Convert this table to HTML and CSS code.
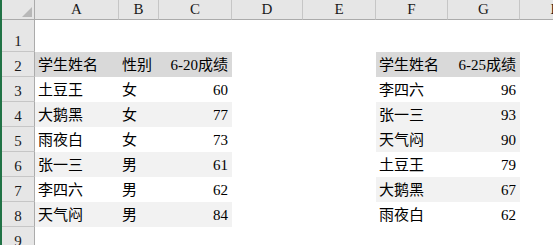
FILE: index.html
```html
<!DOCTYPE html>
<html lang="zh-CN">
<head>
<meta charset="utf-8">
<title>Sheet</title>
<link rel="stylesheet" href="styles.css">
</head>
<body>
<div class="sheet">
  <div class="row hdr">
    <div class="corner"><span class="tri"></span></div>
    <div class="ch">A</div><div class="ch">B</div><div class="ch">C</div><div class="ch">D</div>
    <div class="ch">E</div><div class="ch">F</div><div class="ch">G</div><div class="ch ch-last">H</div>
  </div>
  <div class="row r1">
    <div class="rh">1</div>
    <div class="c"></div><div class="c"></div><div class="c"></div><div class="c"></div>
    <div class="c"></div><div class="c"></div><div class="c"></div><div class="c"></div>
  </div>
  <div class="row">
    <div class="rh">2</div>
    <div class="c th">学生姓名</div><div class="c th">性别</div><div class="c th num">6-20成绩</div><div class="c"></div>
    <div class="c"></div><div class="c th">学生姓名</div><div class="c th num">6-25成绩</div><div class="c"></div>
  </div>
  <div class="row">
    <div class="rh">3</div>
    <div class="c">土豆王</div><div class="c">女</div><div class="c num">60</div><div class="c"></div>
    <div class="c"></div><div class="c">李四六</div><div class="c num">96</div><div class="c"></div>
  </div>
  <div class="row">
    <div class="rh">4</div>
    <div class="c alt">大鹅黑</div><div class="c alt">女</div><div class="c alt num">77</div><div class="c"></div>
    <div class="c"></div><div class="c alt">张一三</div><div class="c alt num">93</div><div class="c"></div>
  </div>
  <div class="row">
    <div class="rh">5</div>
    <div class="c">雨夜白</div><div class="c">女</div><div class="c num">73</div><div class="c"></div>
    <div class="c"></div><div class="c alt">天气闷</div><div class="c alt num">90</div><div class="c"></div>
  </div>
  <div class="row">
    <div class="rh">6</div>
    <div class="c alt">张一三</div><div class="c alt">男</div><div class="c alt num">61</div><div class="c"></div>
    <div class="c"></div><div class="c">土豆王</div><div class="c num">79</div><div class="c"></div>
  </div>
  <div class="row">
    <div class="rh">7</div>
    <div class="c">李四六</div><div class="c">男</div><div class="c num">62</div><div class="c"></div>
    <div class="c"></div><div class="c alt">大鹅黑</div><div class="c alt num">67</div><div class="c"></div>
  </div>
  <div class="row">
    <div class="rh">8</div>
    <div class="c alt">天气闷</div><div class="c alt">男</div><div class="c alt num">84</div><div class="c"></div>
    <div class="c"></div><div class="c">雨夜白</div><div class="c num">62</div><div class="c"></div>
  </div>
  <div class="row">
    <div class="rh">9</div>
    <div class="c"></div><div class="c"></div><div class="c"></div><div class="c"></div>
    <div class="c"></div><div class="c"></div><div class="c"></div><div class="c"></div>
  </div>
</div>
</body>
</html>
```

FILE: styles.css
```css
* { box-sizing: border-box; }
html, body {
  margin: 0;
  padding: 0;
  background: #ffffff;
  overflow: hidden;
}
body {
  width: 553px;
  height: 245px;
  font-family: "Liberation Serif", "Noto Sans CJK SC", serif;
  color: #000;
}
.sheet {
  width: 553px;
  height: 245px;
  border-left: 2px solid #217346;
  overflow: hidden;
}
.row {
  display: grid;
  grid-template-columns: 33px 84px 40px 73px 71px 73px 72px 72px 72px;
  height: 25px;
}
.row.hdr { height: 20px; }
.row.r1 { height: 32px; }

.corner {
  position: relative;
  background: #e6e6e6;
  border-right: 1px solid #ababab;
  border-bottom: 1px solid #ababab;
}
.tri {
  position: absolute;
  right: 2px;
  bottom: 2px;
  width: 0;
  height: 0;
  border-left: 10px solid transparent;
  border-bottom: 10px solid #b8b8b8;
}
.ch {
  background: #e6e6e6;
  border-bottom: 1px solid #ababab;
  border-right: 1px solid #c6c6c6;
  font-size: 15px;
  line-height: 19px;
  text-align: center;
  color: #1a1a1a;
  overflow: hidden;
  white-space: nowrap;
}
.ch-last { border-right: none; }
.rh {
  background: #e6e6e6;
  border-right: 1px solid #ababab;
  border-bottom: 1px solid #c6c6c6;
  font-size: 15px;
  display: flex;
  align-items: flex-end;
  justify-content: center;
  line-height: 16px;
  padding-bottom: 2px;
  color: #1a1a1a;
}
.c {
  font-size: 15px;
  line-height: 23px;
  padding: 2px 4px 0 3px;
  white-space: nowrap;
}
.th { background: #d9d9d9; }
.alt { background: #f2f2f2; }
.num { text-align: right; }
```
